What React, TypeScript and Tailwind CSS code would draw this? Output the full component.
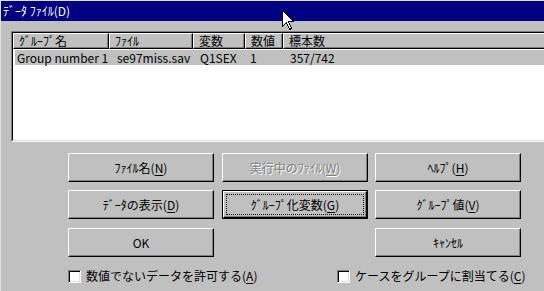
import React from "react";

interface ButtonProps {
    children: React.ReactNode;
    disabled?: boolean;
    isDefault?: boolean;
}

const Key = ({ k }: { k: string }) => (
    <span>
        (<span className="underline underline-offset-[2px]">{k}</span>)
    </span>
);

const Win95Button = ({ children, disabled, isDefault }: ButtonProps) => {
    if (isDefault) {
        return (
            <div className="w-[146px] h-[29px] border border-black">
                <div className="h-full border border-t-white border-l-white border-r-black border-b-black shadow-[inset_-1px_-1px_0_#808080] p-[2px]">
                    <div className="h-full border border-dotted border-black flex items-center justify-center">
                        {children}
                    </div>
                </div>
            </div>
        );
    }
    return (
        <div
            className={`w-[146px] h-[29px] border border-t-white border-l-white border-r-black border-b-black shadow-[inset_-1px_-1px_0_#808080] flex items-center justify-center ${
                disabled ? "text-[#808080] [text-shadow:1px_1px_0_#fff]" : "text-black"
            }`}
        >
            {children}
        </div>
    );
};

const Checkbox = ({ children }: { children: React.ReactNode }) => (
    <div className="flex items-center gap-[5px]">
        <div className="w-[13px] h-[13px] bg-white border border-t-[#808080] border-l-[#808080] border-r-white border-b-white shadow-[inset_1px_1px_0_#000,inset_-1px_-1px_0_#dfdfdf]"></div>
        <span>{children}</span>
    </div>
);

const HeaderCell = ({ label, w }: { label: string; w: string }) => (
    <div
        className={`${w} h-full border border-t-white border-l-white border-r-black border-b-black shadow-[inset_-1px_-1px_0_#808080] pl-[5px] flex items-center`}
    >
        {label}
    </div>
);

export default function App() {
    return (
        <div className="relative w-[544px] h-[291px] overflow-hidden bg-[#c0c0c0] border-t border-l border-[#dfdfdf] font-['Noto_Sans_CJK_JP',sans-serif] text-[12px] leading-[14px] text-black">
            {/* title bar */}
            <div className="h-[20px] bg-[#000080] text-white pl-[2px] flex items-center">
                ﾃﾞｰﾀ ﾌｧｲﾙ(D)
            </div>

            {/* list view */}
            <div className="ml-[10px] mt-[10px] w-[600px] h-[111px] border border-t-[#808080] border-l-[#808080] border-r-white border-b-white">
                <div className="h-full bg-white border border-t-black border-l-black border-r-[#dfdfdf] border-b-[#dfdfdf]">
                    <div className="h-[16px] flex bg-[#c0c0c0]">
                        <HeaderCell label="ｸﾞﾙｰﾌﾟ名" w="w-[96px]" />
                        <HeaderCell label="ﾌｧｲﾙ" w="w-[84px]" />
                        <HeaderCell label="変数" w="w-[52px]" />
                        <HeaderCell label="数値" w="w-[38px]" />
                        <HeaderCell label="標本数" w="flex-1" />
                    </div>
                    <div className="ml-[2px] mt-[1px] h-[15px] bg-[#c0c0c0] flex items-center">
                        <div className="w-[94px] pl-[2px]">Group number 1</div>
                        <div className="w-[84px] pl-[8px]">se97miss.sav</div>
                        <div className="w-[52px] pl-[7px]">Q1SEX</div>
                        <div className="w-[38px] pl-[5px]">1</div>
                        <div className="pl-[7px]">357/742</div>
                    </div>
                </div>
            </div>

            {/* buttons */}
            <div className="ml-[67px] mt-[11px] grid grid-cols-[154px_153px_146px] grid-rows-[37px_38px_29px]">
                <Win95Button>
                    ﾌｧｲﾙ名<Key k="N" />
                </Win95Button>
                <Win95Button disabled>
                    実行中のﾌｧｲﾙ<Key k="W" />
                </Win95Button>
                <Win95Button>
                    ﾍﾙﾌﾟ<Key k="H" />
                </Win95Button>

                <Win95Button>
                    ﾃﾞｰﾀの表示<Key k="D" />
                </Win95Button>
                <Win95Button isDefault>
                    ｸﾞﾙｰﾌﾟ化変数<Key k="G" />
                </Win95Button>
                <Win95Button>
                    ｸﾞﾙｰﾌﾟ値<Key k="V" />
                </Win95Button>

                <Win95Button>OK</Win95Button>
                <div></div>
                <Win95Button>ｷｬﾝｾﾙ</Win95Button>
            </div>

            {/* options */}
            <div className="ml-[67px] mt-[12px] grid grid-cols-[269px_auto]">
                <Checkbox>
                    数値でないデータを許可する<Key k="A" />
                </Checkbox>
                <Checkbox>
                    ケースをグループに割当てる<Key k="C" />
                </Checkbox>
            </div>

            {/* mouse pointer */}
            <svg className="absolute left-[281px] top-[9px]" width="13" height="21" viewBox="0 0 13 21">
                <path
                    d="M0.5 0.5 V16.5 L4.5 12.5 L7.5 19.5 L9.5 18.5 L6.5 11.5 H11.5 Z"
                    fill="white"
                    stroke="black"
                    strokeWidth="1"
                    shapeRendering="crispEdges"
                />
            </svg>
        </div>
    );
}
